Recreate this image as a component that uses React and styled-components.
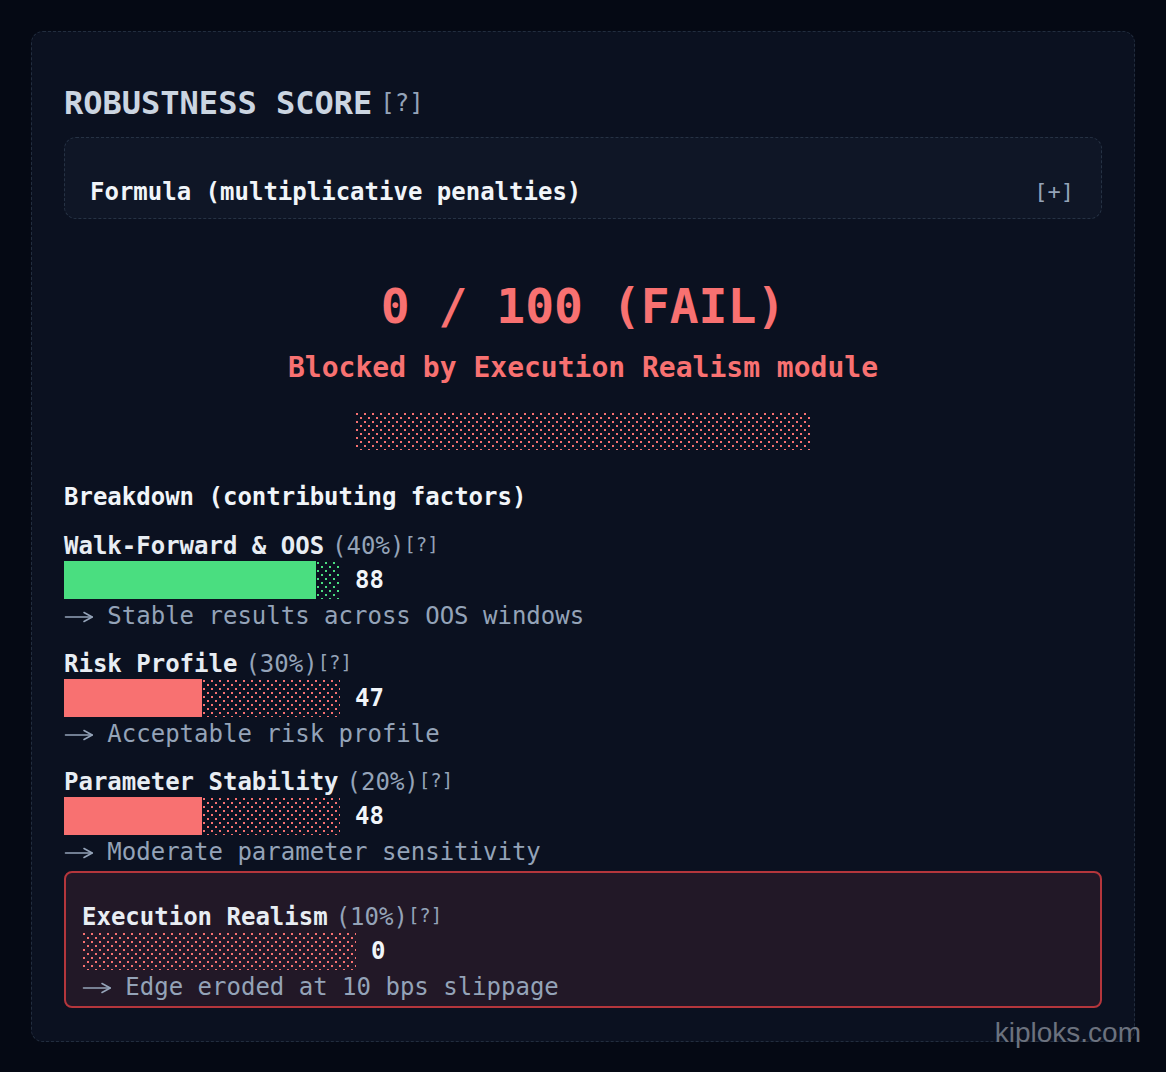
import React, { useId } from 'react';
import styled, { createGlobalStyle } from 'styled-components';

const RED = '#f87171';
const GREEN = '#4ade80';
const MUTED = '#94a3b8';

const GlobalStyle = createGlobalStyle`
  html, body { margin: 0; padding: 0; background: #050914; }
  body { font-family: "DejaVu Sans Mono", "Liberation Mono", monospace; }
`;

const Page = styled.div`
  position: relative;
  min-height: 1072px;
  box-sizing: border-box;
  padding: 31px;
  background: #050914;
`;

const Card = styled.section`
  box-sizing: border-box;
  border: 1px dashed #222d3e;
  border-radius: 12px;
  background: #0b1120;
  padding: 51px 32px 33px;
`;

const TitleRow = styled.div`
  display: flex;
  align-items: flex-start;
`;

const Title = styled.h2`
  margin: 0;
  font-size: 32px;
  line-height: 40px;
  font-weight: 700;
  color: #cbd5e1;
`;

const Help = styled.span`
  color: ${MUTED};
  font-size: ${p => p.$size || 19}px;
  line-height: ${p => p.$lh || 26}px;
  margin-left: ${p => p.$ml || 0}px;
  align-self: flex-start;
`;

const FormulaBox = styled.div`
  margin-top: 14px;
  display: flex;
  justify-content: space-between;
  align-items: center;
  border: 1px dashed #263244;
  border-radius: 12px;
  background: #0f1626;
  padding: 38px 27px 10px 25px;
`;

const FormulaText = styled.span`
  font-size: 24px;
  line-height: 32px;
  font-weight: 700;
  color: #f1f5f9;
`;

const Toggle = styled.span`
  font-size: 22px;
  line-height: 32px;
  color: ${MUTED};
`;

const Score = styled.div`
  margin-top: 59px;
  text-align: center;
  font-size: 48px;
  line-height: 56px;
  font-weight: 700;
  color: ${RED};
`;

const Blocked = styled.div`
  margin-top: 16px;
  text-align: center;
  font-size: 28px;
  line-height: 36px;
  font-weight: 700;
  color: ${RED};
`;

const BigBar = styled.div`
  display: flex;
  width: 457px;
  height: 38px;
  margin: 26px auto 0;
`;

const SectionHead = styled.h3`
  margin: 31px 0 0;
  font-size: 24px;
  line-height: 32px;
  font-weight: 700;
  color: #f1f5f9;
`;

const Factors = styled.div`
  margin-top: 18px;
  display: flex;
  flex-direction: column;
`;

const Factor = styled.div`
  display: flex;
  flex-direction: column;
  & + & { margin-top: 18px; }
`;

const HighlightFactor = styled(Factor)`
  && { margin-top: 4px; }
  border: 2px solid #b4363c;
  border-radius: 8px;
  background: #221827;
  padding: 29px 16px 4px 16px;
`;

const LabelRow = styled.div`
  display: flex;
  align-items: baseline;
  height: 30px;
`;

const Label = styled.span`
  font-size: 24px;
  line-height: 30px;
  font-weight: 700;
  color: #e8edf3;
`;

const Weight = styled.span`
  font-size: 24px;
  line-height: 30px;
  color: ${MUTED};
  margin-left: 8px;
`;

const BarRow = styled.div`
  display: flex;
  align-items: center;
  gap: 15px;
`;

const Track = styled.div`
  display: flex;
  width: ${p => p.$w}px;
  height: 38px;
`;

const Fill = styled.div`
  height: 100%;
  flex: none;
  background: ${p => p.$color};
`;

const Dotted = styled.svg`
  display: block;
  flex: 1;
  height: 100%;
`;

const Value = styled.span`
  font-size: 24px;
  line-height: 30px;
  font-weight: 700;
  color: #f1f5f9;
`;

const Desc = styled.div`
  margin-top: 2px;
  font-size: 24px;
  line-height: 30px;
  color: ${MUTED};
  white-space: pre;
`;

const ArrowBox = styled.span`
  display: inline-block;
  width: 2ch;
  vertical-align: middle;
  line-height: 0;
  svg { display: block; }
`;

const Watermark = styled.div`
  position: absolute;
  right: 25px;
  bottom: 26px;
  font-family: "Liberation Sans", Arial, sans-serif;
  font-size: 28px;
  line-height: 28px;
  color: #6c727e;
`;

const Dots = ({ color }) => {
  const id = useId().replace(/:/g, '');
  return (
    <Dotted shapeRendering="crispEdges">
      <defs>
        <pattern id={id} width="8" height="8" patternUnits="userSpaceOnUse">
          <rect x="1" y="1" width="2" height="2" fill={color} />
          <rect x="5" y="5" width="2" height="2" fill={color} />
        </pattern>
      </defs>
      <rect width="100%" height="100%" fill={`url(#${id})`} />
    </Dotted>
  );
};

const Arrow = () => (
  <ArrowBox>
    <svg width="30" height="12" viewBox="0 0 30 12" fill="none" stroke={MUTED} strokeWidth="1.6" strokeLinecap="round" strokeLinejoin="round">
      <path d="M1.5 6 H28" />
      <path d="M20 1.5 L28.2 6 L20 10.5" />
    </svg>
  </ArrowBox>
);

const factors = [
  { name: 'Walk-Forward & OOS', weight: '(40%)', value: 88, fill: 252, color: GREEN, desc: 'Stable results across OOS windows' },
  { name: 'Risk Profile', weight: '(30%)', value: 47, fill: 138, color: RED, desc: 'Acceptable risk profile' },
  { name: 'Parameter Stability', weight: '(20%)', value: 48, fill: 138, color: RED, desc: 'Moderate parameter sensitivity' },
];

const FactorBody = ({ f, width }) => (
  <>
    <LabelRow>
      <Label>{f.name}</Label>
      <Weight>{f.weight}</Weight>
      <Help>[?]</Help>
    </LabelRow>
    <BarRow>
      <Track $w={width}>
        {f.fill > 0 && <Fill $color={f.color} style={{ width: f.fill }} />}
        <Dots color={f.color} />
      </Track>
      <Value>{f.value}</Value>
    </BarRow>
    <Desc><Arrow />{' ' + f.desc}</Desc>
  </>
);

export default function App() {
  return (
    <Page>
      <GlobalStyle />
      <Card>
        <TitleRow>
          <Title>ROBUSTNESS SCORE</Title>
          <Help $size={24} $lh={40} $ml={8}>[?]</Help>
        </TitleRow>
        <FormulaBox>
          <FormulaText>Formula (multiplicative penalties)</FormulaText>
          <Toggle>[+]</Toggle>
        </FormulaBox>
        <Score>0 / 100 (FAIL)</Score>
        <Blocked>Blocked by Execution Realism module</Blocked>
        <BigBar>
          <Dots color={RED} />
        </BigBar>
        <SectionHead>Breakdown (contributing factors)</SectionHead>
        <Factors>
          {factors.map(f => (
            <Factor key={f.name}>
              <FactorBody f={f} width={276} />
            </Factor>
          ))}
          <HighlightFactor>
            <FactorBody
              f={{ name: 'Execution Realism', weight: '(10%)', value: 0, fill: 0, color: RED, desc: 'Edge eroded at 10 bps slippage' }}
              width={274}
            />
          </HighlightFactor>
        </Factors>
      </Card>
      <Watermark>kiploks.com</Watermark>
    </Page>
  );
}
